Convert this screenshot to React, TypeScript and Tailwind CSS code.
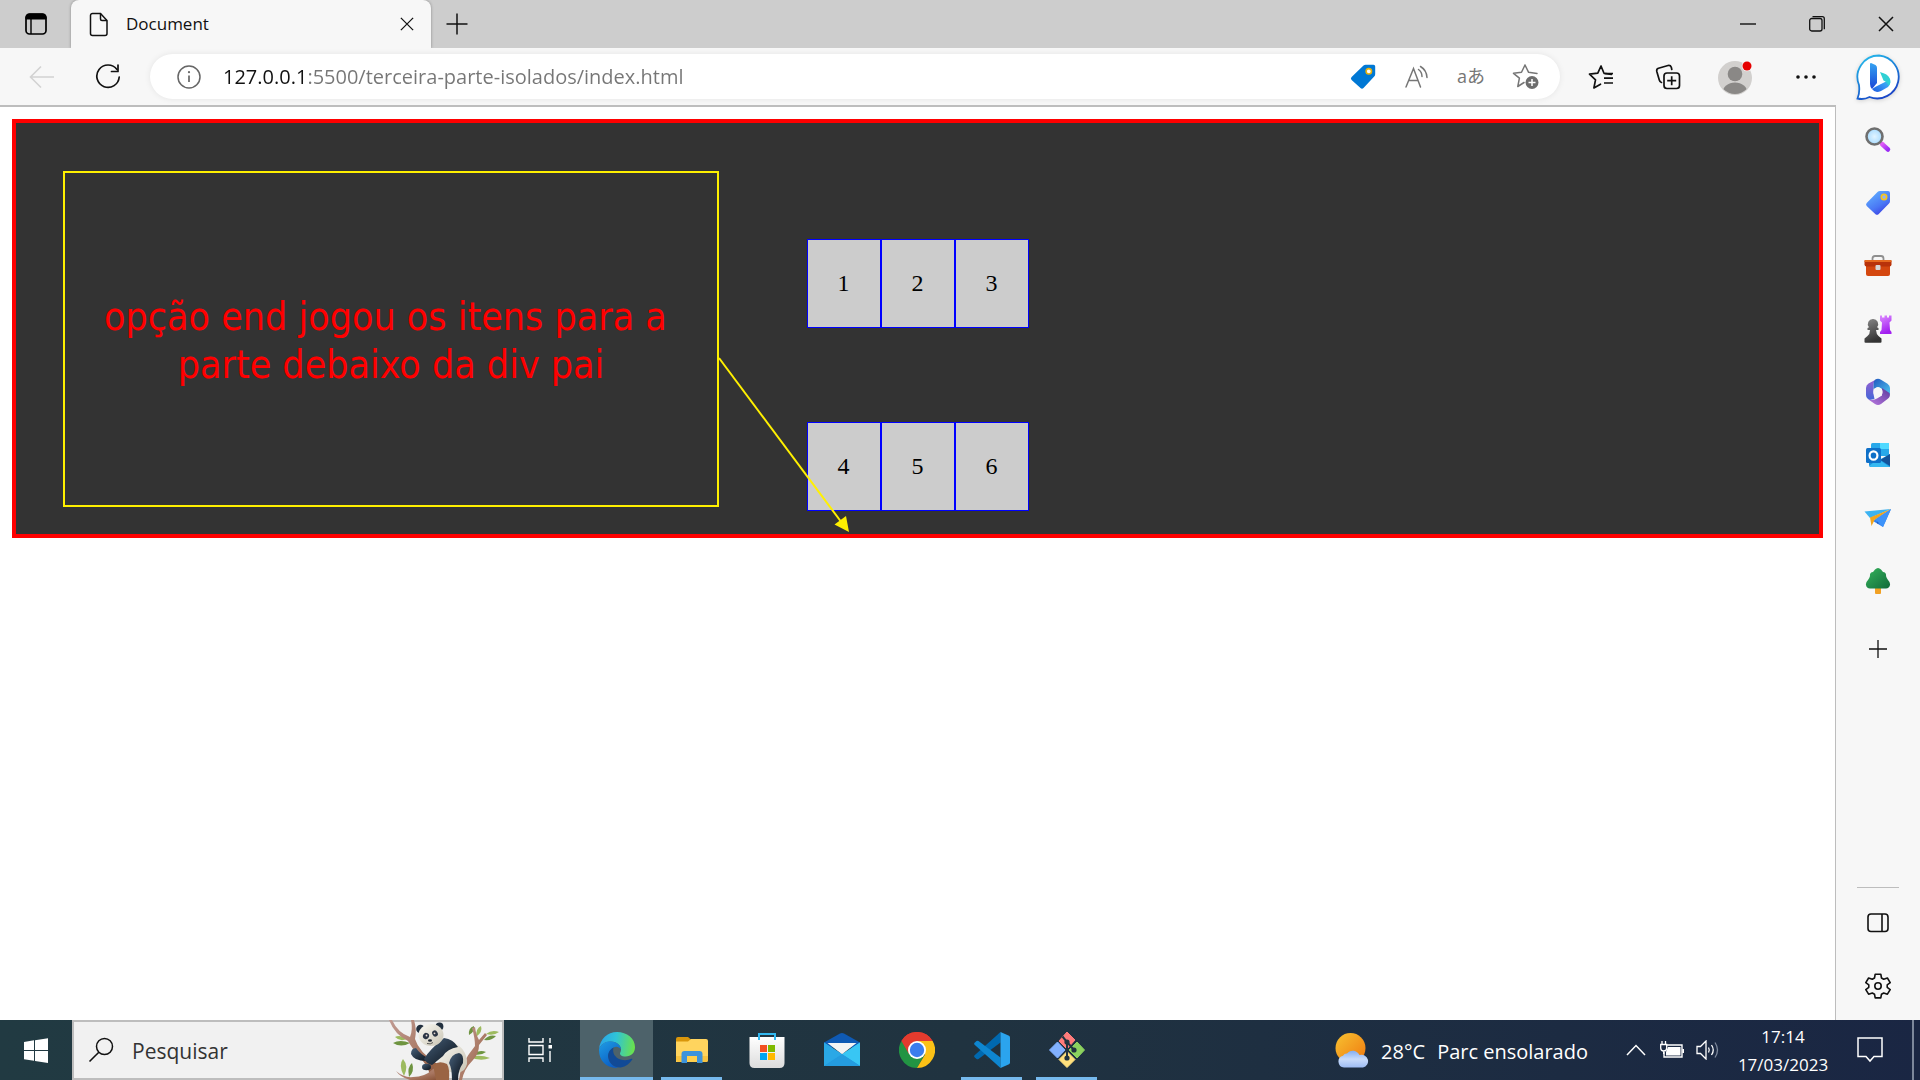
import React from "react";

type IconProps = { className?: string };

const Svg = ({ box, className, children }: { box: string; className: string; children: React.ReactNode }) => (
  <svg viewBox={box} className={className} fill="none" aria-hidden="true">
    {children}
  </svg>
);

/* ---------- browser chrome icons ---------- */

const WorkspaceIcon = () => (
  <Svg box="0 0 22 22" className="h-[22px] w-[22px]">
    <rect x="1" y="1" width="20" height="20" rx="3.5" stroke="#000" strokeWidth="1.7" />
    <path d="M1 6V4.5A3.5 3.5 0 0 1 4.500 1h13A3.500 3.500 0 0 1 21 4.500V6Z" fill="#000" stroke="#000" />
    <path d="M6 6v15" stroke="#000" strokeWidth="1.400" />
  </Svg>
);

const PageIcon = () => (
  <Svg box="0 0 20 25" className="h-[25px] w-5">
    <path d="M3.500 1.500h8l6.500 7V21.500a2 2 0 0 1-2 2H3.500a2 2 0 0 1-2-2v-18a2 2 0 0 1 2-2Z" stroke="#111" strokeWidth="1.500" />
    <path d="M11.500 1.500V7a1.500 1.500 0 0 0 1.500 1.500h5" stroke="#111" strokeWidth="1.500" />
  </Svg>
);

const CrossIcon = ({ className = "" }: IconProps) => (
  <Svg box="0 0 16 16" className={className}>
    <path d="m1 1 14 14M15 1 1 15" stroke="#111" strokeWidth="1.500" />
  </Svg>
);

const PlusIcon = () => (
  <Svg box="0 0 22 22" className="h-[22px] w-[22px]">
    <path d="M11 .5v21M.5 11h21" stroke="#111" strokeWidth="1.500" />
  </Svg>
);

const BackIcon = () => (
  <Svg box="0 0 26 24" className="h-6 w-[26px]">
    <path d="M12 1.500 1.500 12 12 22.500M1.500 12H25" stroke="#d2d2d2" strokeWidth="1.600" />
  </Svg>
);

const ReloadIcon = () => (
  <Svg box="0 0 26 26" className="h-[26px] w-[26px]">
    <path d="M22 5.500A11.200 11.200 0 1 0 24.200 13" stroke="#111" strokeWidth="1.700" strokeLinecap="round" />
    <path d="M23 1v6.500h-6.500" stroke="#111" strokeWidth="1.700" strokeLinecap="round" strokeLinejoin="round" />
  </Svg>
);

const InfoIcon = () => (
  <Svg box="0 0 24 24" className="h-6 w-6">
    <circle cx="12" cy="12" r="11" stroke="#666" strokeWidth="1.500" />
    <path d="M12 10.500V17" stroke="#666" strokeWidth="1.700" />
    <circle cx="12" cy="7.200" r="1.100" fill="#666" />
  </Svg>
);

const TagIcon = () => (
  <Svg box="0 0 26 26" className="h-[26px] w-[26px]">
    <path d="M13.500 1.500Q14.500.7 16 .8h7.500Q25.200.9 25.200 2.500V10q0 1.500-1 2.500L13.500 24q-1.500 1.500-3 0L1.600 16q-1.500-1.500 0-3Z" fill="#0078d4" />
    <circle cx="18.800" cy="7.300" r="2.700" fill="#fff" stroke="#e8b10c" strokeWidth="1.600" />
  </Svg>
);

const ReadAloudIcon = () => (
  <Svg box="0 0 24 24" className="h-6 w-6">
    <path d="M1 22 8.500 3.500 15.500 22M3.600 15.500h9.500" stroke="#767676" strokeWidth="1.500" strokeLinecap="round" />
    <path d="M13.500 4.500q3.500 2.500 3.500 7M15.500 1.500q6 3.500 6.500 11" stroke="#767676" strokeWidth="1.500" strokeLinecap="round" />
  </Svg>
);

const StarAddIcon = () => (
  <Svg box="0 0 27 27" className="h-[27px] w-[27px]">
    <path d="m13 2 3.600 7.300 8.400 1.200M12 19.500 5.800 23.500l1.600-8.300L1.500 10.300l8-1L13 2" stroke="#767676" strokeWidth="1.500" strokeLinejoin="round" strokeLinecap="round" />
    <circle cx="20" cy="19.500" r="6.500" fill="#6d6d6d" />
    <path d="M20 16v7M16.500 19.500h7" stroke="#fff" strokeWidth="1.500" />
  </Svg>
);

const FavoritesIcon = () => (
  <Svg box="0 0 26 26" className="h-[26px] w-[26px]">
    <path d="M23.500 10.300 16 9.300 13 2l-3.200 7.200-8.300 1 6 5.600-1.600 8.200 6.600-3.800" stroke="#111" strokeWidth="1.700" strokeLinejoin="round" strokeLinecap="round" />
    <path d="M17 9.500h8M16 14.200h9M16 19h9" stroke="#111" strokeWidth="1.700" />
  </Svg>
);

const CollectionsIcon = () => (
  <Svg box="0 0 26 26" className="h-[26px] w-[26px]">
    <rect x="9" y="9" width="15.500" height="15.500" rx="3" stroke="#111" strokeWidth="1.700" />
    <path d="M16.700 12.200v9M12.200 16.700h9" stroke="#111" strokeWidth="1.700" />
    <path d="M6.500 18.500Q4.800 18 4.300 16L1.800 7.500Q1.200 5 3.500 4.300L13 1.500q2.500-.5 3.300 1.800l.5 2.200" stroke="#111" strokeWidth="1.700" strokeLinecap="round" />
  </Svg>
);

const AvatarIcon = () => (
  <Svg box="0 0 36 36" className="h-9 w-9">
    <defs>
      <clipPath id="avatar-clip">
        <circle cx="17" cy="19" r="16" />
      </clipPath>
    </defs>
    <circle cx="17" cy="19" r="17" fill="#d2d0ce" />
    <g clipPath="url(#avatar-clip)" fill="#8a8886">
      <circle cx="17" cy="15" r="7.300" />
      <ellipse cx="17" cy="34" rx="12.500" ry="10.500" />
    </g>
    <circle cx="29" cy="7" r="5.300" fill="#f7f7f7" />
    <circle cx="29" cy="7" r="4.500" fill="#e60000" />
  </Svg>
);

const DotsIcon = () => (
  <Svg box="0 0 22 6" className="h-1.5 w-[22px]">
    <circle cx="3" cy="3" r="1.800" fill="#111" />
    <circle cx="11" cy="3" r="1.800" fill="#111" />
    <circle cx="19" cy="3" r="1.800" fill="#111" />
  </Svg>
);

const BingIcon = () => (
  <Svg box="0 0 46 48" className="h-12 w-[46px] drop-shadow-sm">
    <defs>
      <linearGradient id="bing-ring" x1="0" y1="0" x2=".5" y2="1">
        <stop stopColor="#29c3ee" />
        <stop offset=".55" stopColor="#1a7fd8" />
        <stop offset="1" stopColor="#1b48c8" />
      </linearGradient>
      <linearGradient id="bing-stem" x1="0" y1="0" x2="0" y2="1">
        <stop stopColor="#35a3f2" />
        <stop offset="1" stopColor="#1a45d6" />
      </linearGradient>
      <linearGradient id="bing-bowl" x1="0" y1="1" x2="1" y2="0">
        <stop stopColor="#1e5be0" />
        <stop offset=".6" stopColor="#3a9bf5" />
        <stop offset="1" stopColor="#35dcd4" />
      </linearGradient>
    </defs>
    <path d="M23 1.500a21.500 21.500 0 1 1-9.500 41.500Q8 46 1.500 44.500 4 39 3 31A21.500 21.500 0 0 1 23 1.500Z" fill="#fff" stroke="url(#bing-ring)" strokeWidth="1.800" />
    <path d="m15 9 4.500 2Q21 12 21 14v15l-5 6q-2-2-2-5V10q0-1 1-1Z" fill="url(#bing-stem)" />
    <path d="M16 35q3 4.500 9 2l7-4q4-4 1-9-.6 2.600-4 4L20 32.500Z" fill="url(#bing-bowl)" />
    <path d="M24 18q8 2 9.500 6 2.300 4-1 8-.3-3-3-4.500l-2-1Z" fill="#2fd0d4" />
  </Svg>
);

/* ---------- sidebar icons ---------- */

const SideSearch = () => (
  <Svg box="0 0 28 28" className="h-7 w-7">
    <defs>
      <radialGradient id="lens">
        <stop stopColor="#e2f4ff" />
        <stop offset="1" stopColor="#a9dcff" />
      </radialGradient>
      <linearGradient id="handle" x1="0" y1="0" x2="1" y2="1">
        <stop stopColor="#e05cf5" />
        <stop offset="1" stopColor="#9a2bf5" />
      </linearGradient>
    </defs>
    <path d="m18 18 6 5.500" stroke="url(#handle)" strokeWidth="4.500" strokeLinecap="round" />
    <circle cx="10.500" cy="10.500" r="8" fill="url(#lens)" stroke="#6f6f6f" strokeWidth="2.600" />
  </Svg>
);

const SideTag = () => (
  <Svg box="0 0 26 26" className="h-[26px] w-[26px]">
    <defs>
      <linearGradient id="side-tag" x1=".2" y1="0" x2=".8" y2="1">
        <stop stopColor="#62b1ff" />
        <stop offset=".6" stopColor="#4a78f5" />
        <stop offset="1" stopColor="#3a36e0" />
      </linearGradient>
    </defs>
    <path d="M12.500 2q1-1 2.500-1h8q2 0 2 2v8q0 1.500-1 2.500L13.500 24.200q-1.500 1.300-3 0L1.700 16q-1.300-1.500 0-3Z" fill="url(#side-tag)" />
    <circle cx="19" cy="7" r="2.600" fill="#8ab4ff" stroke="#f4c320" strokeWidth="1.800" />
  </Svg>
);

const SideToolbox = () => (
  <Svg box="0 0 28 24" className="h-6 w-7">
    <path d="M8.500 7V4.500q0-2.500 2.500-2.500h6q2.500 0 2.500 2.500V7" stroke="#8f8f8f" strokeWidth="1.800" />
    <path d="M2 11h24v9q0 2-2 2H4q-2 0-2-2Z" fill="#d4470f" />
    <path d="M1.500 6h25q1 0 1 1v3.500q0 2-2 2h-23q-2 0-2-2V7q0-1 1-1Z" fill="#b8320a" />
    <path d="M1.500 6h25q1 0 1 1v1H.5V7q0-1 1-1Z" fill="#e5691f" />
    <rect x="11.500" y="11" width="5" height="5" rx="1" fill="#d6d6d6" />
  </Svg>
);

const SideGames = () => (
  <Svg box="0 0 28 28" className="h-7 w-7">
    <defs>
      <linearGradient id="rook" x1="0" y1="0" x2=".3" y2="1">
        <stop stopColor="#dc8bff" />
        <stop offset="1" stopColor="#a21ff0" />
      </linearGradient>
      <linearGradient id="pawn" x1="0" y1="0" x2=".3" y2="1">
        <stop stopColor="#8a8a8a" />
        <stop offset="1" stopColor="#333" />
      </linearGradient>
    </defs>
    <path d="M16 .5h2v2h2.500v-2h2.500v2h2v-2h2.500v5l-2 2 .5 7.500 1.500 2v2H16v-2l1.500-2 .5-7.500-2-2Z" fill="url(#rook)" />
    <path d="M9 4a5 5 0 0 1 4 8.200l1.500.8v2H12q.3 4 2.500 6l3 2.500V27q0 .8-1 .8h-15q-1 0-1-.8v-3.500l3-2.500Q6 19 6 15H3.500v-2l1.500-.8A5 5 0 0 1 9 4Z" fill="url(#pawn)" />
  </Svg>
);

const SideM365 = () => (
  <Svg box="0 0 26 28" className="h-7 w-[26px]">
    <defs>
      <linearGradient id="m-left" x1="0" y1="0" x2="0" y2="1">
        <stop stopColor="#9a5fd0" />
        <stop offset="1" stopColor="#4368d8" />
      </linearGradient>
      <linearGradient id="m-right" x1="0" y1="0" x2="1" y2="1">
        <stop stopColor="#2057c0" />
        <stop offset="1" stopColor="#4fc8f0" />
      </linearGradient>
      <linearGradient id="m-low" x1="0" y1="1" x2="1" y2="0">
        <stop stopColor="#bc7ae2" />
        <stop offset="1" stopColor="#5b3b9c" />
      </linearGradient>
    </defs>
    <path d="M12 1Q9 2 8.500 6v10l1 5-5 1-2-1.500Q1 19 1 17v-7q0-3 2.500-4.500Z" fill="url(#m-left)" />
    <path d="M10 1.700q3-1.700 6 0l6.500 4Q25 7.500 25 10v7l-8-6-4-2-4.500 2V6q0-3 1.500-4.300Z" fill="url(#m-right)" />
    <path d="m17 10 7.500 5q1.500 3.500-2 6l-6.500 5q-3 2-6 0L3 21.300q5.500 1.500 9-.8l5-3Z" fill="url(#m-low)" />
    <circle cx="13" cy="14" r="4.700" fill="#f7f7f7" />
  </Svg>
);

const SideOutlook = () => (
  <Svg box="0 0 26 26" className="h-[26px] w-[26px]">
    <rect x="6" y="1" width="18" height="13" rx="1.500" fill="#28a8ea" />
    <path d="M15 1h9v6h-9Z" fill="#50d9ff" />
    <path d="M6 7h9v8H6Z" fill="#0364b8" />
    <path d="m25 12-11 6-10-5v10q0 2 2 2h19Z" fill="#1a8fdc" />
    <path d="m25 12-9.500 6 9.500 6Z" fill="#14539a" />
    <path d="m4 24 9-7 12 8H6Z" fill="#35b8f1" />
    <rect x="1" y="6" width="15" height="15" rx="1.500" fill="#0f70c8" />
    <ellipse cx="8.500" cy="13.500" rx="3.900" ry="4.200" stroke="#fff" strokeWidth="2.200" />
  </Svg>
);

const SidePlane = () => (
  <Svg box="0 0 28 20" className="h-5 w-7">
    <path d="M27 1 .5 3.500 6 10l21-9Z" fill="#3bb3f2" />
    <path d="m27 1-8 18-10-6Z" fill="#2d7ff0" />
    <path d="m13 12 .5 4L17 13Z" fill="#1b4fb4" />
    <path d="M27 1 6 9.500 7.500 18l3-6Z" fill="#f2a51d" />
    <path d="m27 1-16 10.500L19 19Z" fill="#3d93fa" />
  </Svg>
);

const SideTree = () => (
  <Svg box="0 0 26 28" className="h-7 w-[26px]">
    <defs>
      <linearGradient id="tree" x1="0" y1="0" x2="1" y2="1">
        <stop stopColor="#35b45c" />
        <stop offset="1" stopColor="#126a3a" />
      </linearGradient>
    </defs>
    <rect x="10" y="20" width="6" height="7" rx="1" fill="#f1a124" />
    <path d="M10 2.500q3-3 6 0l2 2.500q3.500.5 3 4 .5 2 2 4 2.500 2.500 2 5-.7 3.300-4 3.500H5q-3.500-.2-4-3.500-.5-2.500 2-5 1.500-2 2-4-.5-3.500 3-4Z" fill="url(#tree)" />
  </Svg>
);

const SideAdd = () => (
  <Svg box="0 0 20 20" className="h-5 w-5">
    <path d="M10 1v18M1 10h18" stroke="#111" strokeWidth="1.300" />
  </Svg>
);

const SidePanelIcon = () => (
  <Svg box="0 0 22 20" className="h-5 w-[22px]">
    <rect x="1" y="1" width="20" height="17.500" rx="3" stroke="#111" strokeWidth="1.600" />
    <path d="M15 1v17.500" stroke="#111" strokeWidth="1.600" />
  </Svg>
);

const GearIcon = () => (
  <Svg box="0 0 26 26" className="h-[26px] w-[26px]">
    <path
      d="M10.200 1.200h5.600l.7 3.800 2.200 1.300 3.700-1.300 2.800 4.700-3 2.200v2.400l3 2.300-2.800 4.600-3.700-1.200-2.200 1.200-.7 3.700h-5.600L9.500 21.200l-2.200-1.200-3.700 1.200L.8 16.600l3-2.300v-2.400l-3-2.200L3.600 5l3.700 1.300L9.500 5Z"
      stroke="#111"
      strokeWidth="1.600"
      strokeLinejoin="round"
    />
    <circle cx="13" cy="13" r="3.200" stroke="#111" strokeWidth="1.600" />
  </Svg>
);

/* ---------- taskbar icons ---------- */

const WindowsIcon = () => (
  <Svg box="0 0 24 25" className="h-[25px] w-6">
    <path d="M0 4 10 2.300V12H0ZM11 2.200 24 .2V12H11ZM0 13h10v9.800L0 21.200ZM11 13h13v12l-13-1.900Z" fill="#fff" />
  </Svg>
);

const SearchIcon = () => (
  <Svg box="0 0 26 26" className="h-[26px] w-[26px]">
    <circle cx="16.500" cy="9.500" r="8" stroke="#111" strokeWidth="1.500" />
    <path d="M10.800 15.200 1.500 24.500" stroke="#111" strokeWidth="1.600" />
  </Svg>
);

const Leaf = ({ d, dark = false }: { d: string; dark?: boolean }) => <path d={d} fill={dark ? "#6e9440" : "#9dbb5e"} />;

const PandaIcon = () => (
  <Svg box="0 0 112 60" className="h-[60px] w-28">
    <defs>
      <linearGradient id="bark" x1="0" y1="0" x2="1" y2="1">
        <stop stopColor="#c09a92" />
        <stop offset=".6" stopColor="#a87660" />
        <stop offset="1" stopColor="#7c4528" />
      </linearGradient>
      <linearGradient id="fur-dark" x1="0" y1="0" x2="1" y2="1">
        <stop stopColor="#47607a" />
        <stop offset=".6" stopColor="#22303f" />
        <stop offset="1" stopColor="#10151f" />
      </linearGradient>
      <linearGradient id="fur-light" x1="0" y1="0" x2="1" y2="1">
        <stop stopColor="#fbfaf4" />
        <stop offset="1" stopColor="#c9c4b4" />
      </linearGradient>
    </defs>
    <Leaf d="M19 19Q12 14 7 17q5 5 12 2Z" />
    <Leaf d="M22 23Q12 19 5 23q8 5 17 0Z" dark />
    <Leaf d="M16 56Q10 45 15 39q6 7 1 17Z" />
    <Leaf d="M21 57q-2-10 3-14 3 8-3 14Z" dark />
    <Leaf d="M81 15Q80 8 86 6q1 6-5 9Z" dark />
    <Leaf d="M88 17q0-9 5-11 2 6-5 11Z" />
    <Leaf d="M98 14q6-5 13-2-5 4-13 2Z" />
    <Leaf d="M96 20q5-6 12-4-4 5-12 4Z" dark />
    <Leaf d="M84 34q8-5 14-2-5 4-14 2Z" dark />
    <Leaf d="M82 37q10-3 20 1-10 4-20-1Z" />
    <path d="M1 0h3q6 13 18 17Q25 10 23 0h3q3 10 1 19 4 13 21 24l8 17H43Q41 46 32 38 24 28 20 21 7 15 1 0Z" fill="url(#bark)" />
    <path d="M8 51q8 7 17 6 12 0 20-8 12-7 15 5l-1 6H22Q12 57 8 51Z" fill="url(#bark)" />
    <path d="M71 60q1-16 16-34Q87 18 84 8l3-1q1 8 4 13l6-7 2 2-8 10q0 9-6 15-9 9-11 20Z" fill="url(#bark)" />
    <path d="M28 28q-5 0-5 6 3 7 15 7l2-3Q32 34 28 28Z" fill="url(#fur-dark)" />
    <path d="M56 20q18 3 22 16 3 8-2 14-6 5-13 2-9-2-13-12Z" fill="url(#fur-light)" />
    <path d="M56 18q9 1 14 9-11 2-15 9L44 45q-5-1-8-6 5-9 20-21Z" fill="url(#fur-dark)" />
    <path d="M64 60q0-12-3-17 2-9 10-10 5 1 4 10-5 7-5 17Z" fill="url(#fur-dark)" />
    <ellipse cx="38.500" cy="47" rx="4.500" ry="3.200" fill="url(#fur-dark)" />
    <path d="M45 45q6-5 14-1 3 5 2 16H48Z" fill="#9a6443" />
    <circle cx="32.500" cy="9" r="4.300" fill="#22303f" />
    <circle cx="51.500" cy="6.500" r="3.900" fill="#22303f" />
    <ellipse cx="43" cy="15" rx="12.500" ry="11" fill="url(#fur-light)" />
    <ellipse cx="38" cy="16" rx="3" ry="3.200" transform="rotate(30 38 16)" fill="#2b3544" />
    <ellipse cx="47" cy="13.500" rx="2.700" ry="3.200" transform="rotate(-30 47 13.500)" fill="#2b3544" />
    <circle cx="38.500" cy="15.500" r=".9" fill="#e7d9d4" />
    <circle cx="46.500" cy="13.300" r=".9" fill="#e7d9d4" />
    <ellipse cx="42" cy="20.500" rx="2" ry="1.300" fill="#1b2330" />
    <path d="M39 23.500q3.500 1.200 6-1" stroke="#3a3a3a" strokeWidth=".8" />
  </Svg>
);

const TaskViewIcon = () => (
  <Svg box="0 0 26 24" className="h-6 w-[26px]">
    <path d="M1 0v4h14V0M1 24v-4h14v4M1 7.500h14v9H1ZM22 0v5M22 13v11" stroke="#fff" strokeWidth="1.400" />
    <rect x="20.500" y="7" width="3.500" height="3.500" fill="#fff" />
  </Svg>
);

const EdgeIcon = () => (
  <Svg box="0 0 36 36" className="h-9 w-9">
    <defs>
      <linearGradient id="edge-top" x1="0" y1=".4" x2="1" y2=".5">
        <stop stopColor="#2aa4e8" />
        <stop offset=".45" stopColor="#2fc3d8" />
        <stop offset="1" stopColor="#6be24a" />
      </linearGradient>
      <linearGradient id="edge-left" x1="0" y1="0" x2=".6" y2="1">
        <stop stopColor="#1f9de4" />
        <stop offset="1" stopColor="#0a5cc4" />
      </linearGradient>
    </defs>
    <path d="M0 17C1 7 8.500 0 18 0c10 0 18 6.500 18 15 0 6-4 9.500-9.500 9.500-4 0-5.500-1.500-5.500-3 0-1 1-1.500 1-4C22 13 17 9.500 11.500 9.500 6 9.500 1.500 13 0 17Z" fill="url(#edge-top)" />
    <path d="M0 17c2-5 6.500-7.800 11-7.800 6 0 11 3.800 11 8.300-2-3-5-3.500-7.500-2C11 17.500 9 21 9.500 25.500c.6 5 4.500 9 10 10.300C8 37 0 29 0 18Z" fill="url(#edge-left)" />
    <path d="M14.500 15.500C10 18 8.500 22 9.300 26c1.200 6 6.500 10 12.500 9.500 5-1 9-4 11.500-8 .4-.8-.3-1-.8-.7-3 1.500-7 2-11 .7-5.500-1.800-8.500-6.500-7-12Z" fill="#114a96" />
  </Svg>
);

const ExplorerIcon = () => (
  <Svg box="0 0 36 36" className="h-9 w-9">
    <path d="M2 7q0-2 2-2h10l3 2.500V12H2Z" fill="#d9960b" />
    <path d="M2 9.500h12L17 7h15q2 0 2 2v19q0 2-2 2H2Z" fill="#ffd45e" />
    <path d="M2 24h32v4q0 2-2 2H4q-2 0-2-2Z" fill="#f8c33f" />
    <path d="M7.500 31V22q0-3 3-3h15q3 0 3 3v9H23v-7H13v7Z" fill="#3c93dc" />
    <path d="M13 24h10v6H13Z" fill="#ffcf4d" />
  </Svg>
);

const StoreIcon = () => (
  <Svg box="0 0 36 36" className="h-9 w-9">
    <defs>
      <linearGradient id="store" x1="0" y1="0" x2="0" y2="1">
        <stop stopColor="#fff" />
        <stop offset="1" stopColor="#dcdcdc" />
      </linearGradient>
    </defs>
    <path d="M.5 5h35v26q0 5-5 5h-25q-5 0-5-5Z" fill="url(#store)" />
    <path d="M10 8V2h16v6" stroke="#32b8f0" strokeWidth="2" />
    <path d="M11 13h7v7h-7Z" fill="#f25022" />
    <path d="M19 13h7v7h-7Z" fill="#7fba00" />
    <path d="M11 21h7v7h-7Z" fill="#00a4ef" />
    <path d="M19 21h7v7h-7Z" fill="#ffb900" />
  </Svg>
);

const MailIcon = () => (
  <Svg box="0 0 36 36" className="h-9 w-9">
    <path d="M0 10.500 16 1.500q2-1 4 0l16 9v5H0Z" fill="#0f5ab4" />
    <path d="M0 10.500 18 22.300 36 10.500V34H0Z" fill="#2aa8e6" />
    <path d="M36 10.500V34L18 22.300Z" fill="#38c6f4" />
    <path d="M3.500 11h29L18 22.300Z" fill="#f4f4f4" />
    <path d="M0 34 18 22.300 36 34Z" fill="#1f94de" />
    <path d="M0 10.500 18 22.300 0 34Z" fill="#2aa8e6" />
    <path d="M0 34 18 22.300l10 6.500L36 34Z" fill="#249cdf" />
  </Svg>
);

const ChromeIcon = () => (
  <Svg box="0 0 36 36" className="h-9 w-9">
    <path d="M18 18 2.400 9A18 18 0 0 1 33.600 9Z" fill="#e33b2e" />
    <path d="M18 18h-6L2.400 9A18 18 0 0 0 18 36l8-14Z" fill="#229443" />
    <path d="M18 9h15.600A18 18 0 0 1 18 36l8-13.500Z" fill="#fbc116" />
    <path d="M2.400 9 10 22l4-11 4-2h15.600A18 18 0 0 0 2.400 9Z" fill="#e33b2e" />
    <circle cx="18" cy="18" r="9" fill="#fff" />
    <circle cx="18" cy="18" r="7.200" fill="#3b7ded" />
  </Svg>
);

const CodeIcon = () => (
  <Svg box="0 0 36 36" className="h-9 w-9">
    <path d="M26.500 0v10.500L4.500 27q-1 .7-2 0L.6 25.200q-1-1 0-2Z" fill="#0069b0" />
    <path d="M26.500 36V25.500L4.500 9q-1-.7-2 0L.6 10.800q-1 1 0 2Z" fill="#0e86d0" />
    <path d="M26.500 0 35 3.700q1 .5 1 1.800v25q0 1.300-1 1.800L26.500 36Z" fill="#2ba4ee" />
  </Svg>
);

const GitIcon = () => (
  <Svg box="0 0 36 36" className="h-9 w-9">
    <path d="m18 0 8 8-8 9-8-8Z" fill="#ff7b7b" stroke="#ff7b7b" strokeLinejoin="round" />
    <path d="m28 10 7.500 8-7.500 8-8-8Z" fill="#8cd35f" stroke="#8cd35f" strokeLinejoin="round" />
    <path d="m8.500 10 7.500 8-7.500 8L.5 18Z" fill="#82b1ff" stroke="#82b1ff" strokeLinejoin="round" />
    <path d="m18 19.500 8 8-8 8-8-8Z" fill="#ffe07d" stroke="#ffe07d" strokeLinejoin="round" />
    <path d="M13.500 4.500 18 10v16M18 10l7 8" stroke="#20333f" strokeWidth="2" />
    <circle cx="18" cy="10" r="2.600" fill="#20333f" />
    <circle cx="25" cy="18" r="2.600" fill="#20333f" />
    <circle cx="18" cy="26" r="2.600" fill="#20333f" />
  </Svg>
);

const WeatherIcon = () => (
  <Svg box="0 0 34 36" className="h-9 w-[34px]">
    <defs>
      <linearGradient id="sun" x1="0" y1="0" x2="1" y2="1">
        <stop stopColor="#f7c231" />
        <stop offset="1" stopColor="#f0780f" />
      </linearGradient>
      <linearGradient id="cloud" x1="0" y1="0" x2="0" y2="1">
        <stop stopColor="#83aef2" />
        <stop offset=".5" stopColor="#c9dcfb" />
        <stop offset="1" stopColor="#9dbcf3" />
      </linearGradient>
    </defs>
    <circle cx="15.500" cy="16" r="15" fill="url(#sun)" />
    <path d="M9 35.500a6 6 0 0 1-1-11.800q1.500-2.500 4-2.200a7.500 7.500 0 0 1 12.500 1.500A6.500 6.500 0 1 1 28 35.500Z" fill="url(#cloud)" />
  </Svg>
);

const ChevronIcon = () => (
  <Svg box="0 0 20 12" className="h-3 w-5">
    <path d="m1 11 9-9.500L19 11" stroke="#fff" strokeWidth="1.500" />
  </Svg>
);

const BatteryIcon = () => (
  <Svg box="0 0 24 18" className="h-[18px] w-6">
    <path d="M7 4h15v12H4v-5M23.500 8v4" stroke="#fff" strokeWidth="1.400" />
    <path d="M8 6h12.500v8.500H6V11Z" fill="#fff" />
    <path d="M2 0v3.500M5.500 0v3.500M.7 3.500h6V7a3 3 0 0 1-6 0ZM3.700 10v3" stroke="#fff" strokeWidth="1.300" />
  </Svg>
);

const SpeakerIcon = () => (
  <Svg box="0 0 24 20" className="h-5 w-6">
    <path d="M1 6.500h3.500L10 1v18l-5.500-5.500H1Z" stroke="#fff" strokeWidth="1.300" />
    <path d="M12.500 7.500q1.500 2.500 0 5M15.500 5q3.500 5 0 10" stroke="#fff" strokeWidth="1.300" />
    <path d="M19 2.500q5 7.500 0 15" stroke="#7d889b" strokeWidth="1.300" />
  </Svg>
);

const ActionCenterIcon = () => (
  <Svg box="0 0 26 26" className="h-[26px] w-[26px]">
    <path d="M1 1h24v18.500h-8l-4 4.500-4-4.500H1Z" stroke="#fff" strokeWidth="1.500" />
  </Svg>
);

/* ---------- sections ---------- */

const IconButton = ({ label, className, children }: { label: string; className: string; children: React.ReactNode }) => (
  <button type="button" aria-label={label} className={`flex shrink-0 items-center justify-center ${className}`}>
    {children}
  </button>
);

const TitleBar = () => (
  <header className="flex h-12 items-stretch bg-[#cdcdcd]">
    <IconButton label="Espaços de trabalho" className="w-[71px]">
      <WorkspaceIcon />
    </IconButton>
    <div className="flex w-[360px] items-center rounded-t-lg bg-[#f7f7f7] pr-3 pl-[18px] shadow-[0_0_3px_rgba(0,0,0,0.35)]">
      <PageIcon />
      <span className="ml-[17px] flex-1 text-[17px] text-[#111]">Document</span>
      <IconButton label="Fechar guia" className="h-6 w-6">
        <CrossIcon className="h-3.5 w-3.5" />
      </IconButton>
    </div>
    <IconButton label="Nova guia" className="w-[52px]">
      <PlusIcon />
    </IconButton>
    <div className="ml-auto flex">
      <IconButton label="Minimizar" className="w-[69px]">
        <Svg box="0 0 16 16" className="h-4 w-4">
          <path d="M0 8h16" stroke="#111" strokeWidth="1.400" />
        </Svg>
      </IconButton>
      <IconButton label="Restaurar" className="w-[69px]">
        <Svg box="0 0 16 16" className="h-4 w-4">
          <rect x=".7" y="2.500" width="12.300" height="12.500" rx="2" stroke="#111" strokeWidth="1.300" />
          <path d="M3.500.7h9.800q2 0 2 2v10.500" stroke="#111" strokeWidth="1.300" />
        </Svg>
      </IconButton>
      <IconButton label="Fechar" className="w-[69px]">
        <CrossIcon className="h-4 w-4" />
      </IconButton>
    </div>
  </header>
);

const Toolbar = () => (
  <div className="relative flex h-[57px] items-center bg-[#f7f7f7]">
    <IconButton label="Voltar" className="ml-[18px] h-12 w-12">
      <BackIcon />
    </IconButton>
    <IconButton label="Atualizar" className="ml-[18px] h-12 w-12">
      <ReloadIcon />
    </IconButton>
    <div className="ml-[18px] flex h-[45px] flex-1 items-center rounded-full bg-white pr-2 pl-[27px] shadow-[0_0_6px_rgba(0,0,0,0.08)]">
      <InfoIcon />
      <input
        aria-label="Barra de endereços"
        defaultValue="127.0.0.1:5500/terceira-parte-isolados/index.html"
        className="ml-[22px] min-w-0 flex-1 bg-[linear-gradient(90deg,#111_81px,#767676_81px)] bg-clip-text text-xl text-transparent outline-none"
      />
      <div className="flex">
        <IconButton label="Compras" className="w-[54px]">
          <TagIcon />
        </IconButton>
        <IconButton label="Ler em voz alta" className="w-[54px]">
          <ReadAloudIcon />
        </IconButton>
        <IconButton label="Traduzir" className="w-[54px] pb-0.5 text-lg leading-6 text-[#767676]">
          aあ
        </IconButton>
        <IconButton label="Adicionar aos favoritos" className="w-[54px]">
          <StarAddIcon />
        </IconButton>
      </div>
    </div>
    <div className="mr-20 ml-[7px] flex items-center">
      <IconButton label="Favoritos" className="h-12 w-[67px]">
        <FavoritesIcon />
      </IconButton>
      <IconButton label="Coleções" className="h-12 w-[67px]">
        <CollectionsIcon />
      </IconButton>
      <IconButton label="Perfil" className="h-12 w-[70px]">
        <AvatarIcon />
      </IconButton>
      <IconButton label="Configurações e mais" className="h-12 w-[69px]">
        <DotsIcon />
      </IconButton>
    </div>
    <button type="button" aria-label="Bing" className="absolute top-1.5 right-[18px]">
      <BingIcon />
    </button>
  </div>
);

const Cell = ({ n }: { n: number }) => (
  <div className="flex h-[89px] w-[74px] items-center justify-center border border-[#0000ff] bg-[#ccc] pb-0.5 font-['Liberation_Serif',serif] text-2xl text-black">
    {n}
  </div>
);

const WebPage = () => (
  <main className="min-w-0 flex-1 border-t-2 border-r border-[#bdbdbd] bg-white p-3">
    <div className="relative flex flex-col items-center gap-[94px] border-4 border-[#ff0000] bg-[#333] pt-[116px] pb-[23px]">
      <div className="flex">
        {[1, 2, 3].map((n) => (
          <Cell key={n} n={n} />
        ))}
      </div>
      <div className="flex">
        {[4, 5, 6].map((n) => (
          <Cell key={n} n={n} />
        ))}
      </div>
      <p className="absolute top-12 left-[47px] flex h-[336px] w-[656px] items-center justify-center border-2 border-[#fff000] pt-1 text-center font-['DejaVu_Sans_Condensed','DejaVu_Sans',sans-serif] text-[39px] leading-[48px] text-[#ff0000] [font-stretch:condensed]">
        <span>
          opção end jogou os itens para a&nbsp;
          <br />
          parte debaixo da div pai
        </span>
      </p>
      <svg viewBox="0 0 132 176" className="absolute top-[234px] left-[702px] h-44 w-[132px]" fill="none" aria-hidden="true">
        <path d="M1 1 124 166" stroke="#fff000" strokeWidth="2" />
        <path d="m131 175-14.500-7.500L128 159Z" fill="#fff000" />
      </svg>
    </div>
  </main>
);

const sideItems = [
  { label: "Pesquisar", Icon: SideSearch },
  { label: "Compras", Icon: SideTag },
  { label: "Ferramentas", Icon: SideToolbox },
  { label: "Jogos", Icon: SideGames },
  { label: "Microsoft 365", Icon: SideM365 },
  { label: "Outlook", Icon: SideOutlook },
  { label: "Soltar", Icon: SidePlane },
  { label: "Árvore", Icon: SideTree },
];

const Sidebar = () => (
  <aside className="flex w-[84px] flex-col items-center bg-[#f7f7f7] pt-[3px]">
    {sideItems.map(({ label, Icon }) => (
      <IconButton key={label} label={label} className="h-[63px] w-full">
        <Icon />
      </IconButton>
    ))}
    <IconButton label="Personalizar" className="mt-[5px] h-[63px] w-full">
      <SideAdd />
    </IconButton>
    <hr className="mt-auto w-[42px] border-t border-[#bdbdbd]" />
    <IconButton label="Ocultar barra lateral" className="mt-[3px] h-[63px] w-full">
      <SidePanelIcon />
    </IconButton>
    <IconButton label="Configurações" className="mb-[3px] h-[63px] w-full">
      <GearIcon />
    </IconButton>
  </aside>
);

const apps = [
  { label: "Microsoft Edge", Icon: EdgeIcon, open: true, active: true },
  { label: "Explorador de Arquivos", Icon: ExplorerIcon, open: true },
  { label: "Microsoft Store", Icon: StoreIcon },
  { label: "Email", Icon: MailIcon },
  { label: "Google Chrome", Icon: ChromeIcon },
  { label: "Visual Studio Code", Icon: CodeIcon, open: true },
  { label: "Git", Icon: GitIcon, open: true },
];

const Taskbar = () => (
  <footer className="flex h-[60px] items-stretch bg-linear-to-r from-[#213a42] via-[#203340] to-[#1a2643] text-white">
    <IconButton label="Iniciar" className="w-[72px]">
      <WindowsIcon />
    </IconButton>
    <label className="relative flex w-[432px] items-center border-2 border-[#bdbdbd] bg-[#f1f1f1] pl-3.5">
      <SearchIcon />
      <input
        type="text"
        aria-label="Pesquisar"
        placeholder="Pesquisar"
        className="ml-[18px] w-60 bg-transparent pt-1 text-[21px] text-[#222] outline-none placeholder:text-[#333]"
      />
      <span className="absolute -top-0.5 right-0.5">
        <PandaIcon />
      </span>
    </label>
    <IconButton label="Visão de tarefas" className="w-[73px]">
      <TaskViewIcon />
    </IconButton>
    <nav className="flex gap-0.5 pl-[3px]">
      {apps.map(({ label, Icon, open, active }) => (
        <button
          key={label}
          type="button"
          aria-label={label}
          className={`flex w-[73px] flex-col items-center justify-end ${active ? "bg-[#4d626a]" : ""}`}
        >
          <span className="flex flex-1 items-center pt-0.5">
            <Icon />
          </span>
          <span className={`h-[3px] ${open ? "bg-[#76b9ed]" : ""} ${active ? "w-full" : "w-[61px]"}`} />
        </button>
      ))}
    </nav>
    <div className="ml-auto flex items-center">
      <button type="button" className="mr-[38px] flex items-center text-xl whitespace-pre">
        <WeatherIcon />
        <span className="ml-3 pt-1">28°C</span>
        <span className="ml-3 pt-1">Parc ensolarado</span>
      </button>
      <IconButton label="Mostrar ícones ocultos" className="mr-3.5">
        <ChevronIcon />
      </IconButton>
      <IconButton label="Bateria" className="mr-3">
        <BatteryIcon />
      </IconButton>
      <IconButton label="Volume" className="mr-4">
        <SpeakerIcon />
      </IconButton>
      <button type="button" className="w-[94px] pt-0.5 text-center text-[17px] leading-7 whitespace-nowrap">
        <time className="block">17:14</time>
        <time className="block">17/03/2023</time>
      </button>
      <IconButton label="Central de ações" className="mr-[29px] ml-[27px]">
        <ActionCenterIcon />
      </IconButton>
      <button type="button" aria-label="Mostrar área de trabalho" className="h-[60px] w-2 border-l-2 border-[#7c879b]" />
    </div>
  </footer>
);

export default function App() {
  return (
    <div className="flex h-screen flex-col overflow-hidden bg-white font-['Open_Sans','Noto_Sans_CJK_JP',sans-serif]">
      <TitleBar />
      <Toolbar />
      <div className="flex min-h-0 flex-1">
        <WebPage />
        <Sidebar />
      </div>
      <Taskbar />
    </div>
  );
}
